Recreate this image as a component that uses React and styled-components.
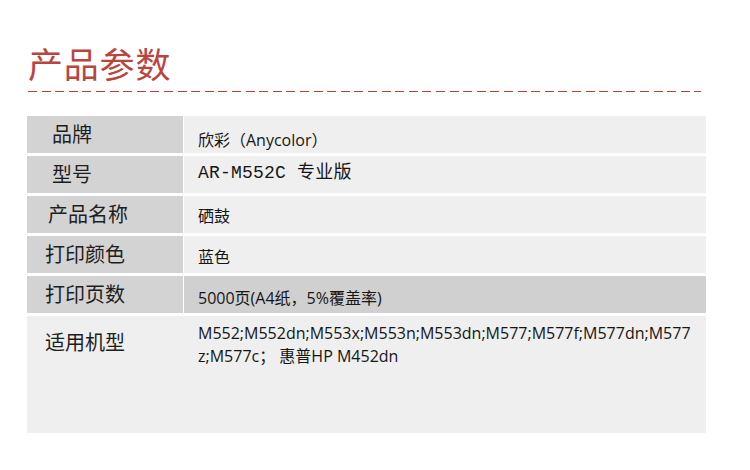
import React from 'react';
import styled, { createGlobalStyle } from 'styled-components';

const GlobalStyle = createGlobalStyle`
  body {
    margin: 0;
    background: #ffffff;
    font-family: "Open Sans", "Noto Sans CJK SC", sans-serif;
    color: #1a1a1a;
  }
`;

const Page = styled.div`
  width: 750px;
  height: 470px;
  padding: 40px 0 0 27px;
  box-sizing: border-box;
`;

const Title = styled.h1`
  margin: 0;
  padding-left: 1px;
  font-family: "Noto Sans CJK SC", sans-serif;
  font-weight: 400;
  font-size: 35px;
  line-height: 46px;
  color: #b8463e;
  letter-spacing: 0.8px;
`;

const Dashes = styled.div`
  width: 673px;
  height: 1px;
  margin: 5px 0 0 1px;
  background: repeating-linear-gradient(
    to right,
    #b8403a 0,
    #b8403a 9px,
    transparent 9px,
    transparent 13.6px
  );
`;

const Table = styled.div`
  display: grid;
  grid-template-columns: 156px 522px;
  grid-auto-rows: 37px;
  column-gap: 1px;
  row-gap: 3px;
  margin-top: 24px;
`;

const Label = styled.div`
  background: ${(p) => (p.$light ? '#efefef' : '#d3d3d3')};
  font-family: "Noto Sans CJK SC", sans-serif;
  font-size: 20px;
  color: #1e1e1e;
  padding-left: ${(p) => p.$indent}px;
  padding-top: ${(p) => p.$top || 4}px;
  line-height: 28px;
  grid-row: ${(p) => (p.$tall ? 'span 3' : 'auto')};
  margin-right: ${(p) => (p.$light ? '-1px' : '0')};
`;

const Value = styled.div`
  background: ${(p) => (p.$dark ? '#d0d0d0' : '#efefef')};
  padding: ${(p) => p.$top}px 4px 0 14px;
  font-size: 16px;
  line-height: 23px;
  color: #161616;
  grid-row: ${(p) => (p.$tall ? 'span 3' : 'auto')};
  word-break: break-all;
`;

const Mono = styled.span`
  font-family: "Liberation Mono", "Noto Sans CJK SC", monospace;
  font-size: 18px;
  letter-spacing: 0.2px;
`;

const rows = [
  { label: '品牌', indent: 25, value: '欣彩（Anycolor）', top: 13 },
  { label: '型号', indent: 25, value: <Mono>AR-M552C 专业版</Mono>, top: 5 },
  { label: '产品名称', indent: 21, value: '硒鼓', top: 9 },
  { label: '打印颜色', indent: 18, value: '蓝色', top: 10 },
  { label: '打印页数', indent: 18, value: '5000页(A4纸，5%覆盖率)', top: 11, dark: true },
];

export default function App() {
  return (
    <Page>
      <GlobalStyle />
      <Title>产品参数</Title>
      <Dashes />
      <Table>
        {rows.map((r) => (
          <React.Fragment key={r.label}>
            <Label $indent={r.indent}>{r.label}</Label>
            <Value $top={r.top} $dark={r.dark}>{r.value}</Value>
          </React.Fragment>
        ))}
        <Label $indent={18} $light $tall $top={12}>适用机型</Label>
        <Value $top={6} $tall>
          M552;M552dn;M553x;M553n;M553dn;M577;M577f;M577dn;M577z;M577c； 惠普HP M452dn
        </Value>
      </Table>
    </Page>
  );
}
